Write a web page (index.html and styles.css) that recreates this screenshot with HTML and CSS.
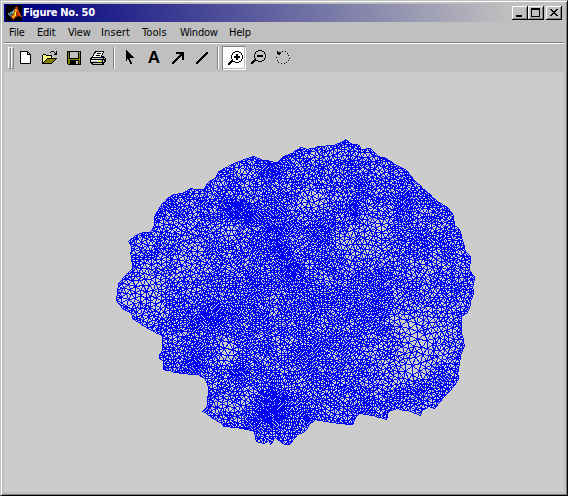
FILE: index.html
```html
<!DOCTYPE html>
<html lang="en">
<head>
<meta charset="utf-8">
<title>Figure No. 50</title>
<link rel="stylesheet" href="styles.css">
</head>
<body>
<main class="window">
  <header class="titlebar">
    <svg class="logo" viewBox="0 0 16 16" shape-rendering="crispEdges">
      <path fill="#000" d="M0 0h16v16H0z"/>
      <path fill="#6caab0" d="M1 9l4-2 3-3 1 1-3 7-2-1z"/>
      <path fill="#536b77" d="M1 9l4-1 2 2-2 3z"/>
      <path fill="#9c2d10" d="M10 1l-2 6-3 5 2 3 3-3 3-1 3 1-3-6-2-5z"/>
      <path fill="#ff9a00" d="M10 2l-2 7-2 3 1 2 3-4 1-5z"/>
      <path fill="#ffef3a" d="M10 4l-1 6-2 3 3-3z"/>
      <path fill="#e53b12" d="M11 3l1 8 3 1-2-5z"/>
    </svg>
    <h1 class="title">Figure No. 50</h1>
    <div class="controls">
      <button class="control" aria-label="Minimize"><svg viewBox="0 0 16 14" shape-rendering="crispEdges"><path d="M4 9h6v2H4z"/></svg></button>
      <button class="control" aria-label="Maximize"><svg viewBox="0 0 16 14" shape-rendering="crispEdges"><path fill-rule="evenodd" d="M3 2h9v9H3zM4 4v6h7V4z"/></svg></button>
      <button class="control close" aria-label="Close"><svg viewBox="0 0 16 14" shape-rendering="crispEdges"><path d="M4 3h2v1h1v1h2V4h1V3h2v1h-1v1h-1v1H9v1h1v1h1v1h1v1h-2V9H9V8H7v1H6v1H4V9h1V8h1V7h1V6H6V5H5V4H4z"/></svg></button>
    </div>
  </header>
  <nav class="menu">
    <span>File</span><span>Edit</span><span>View</span><span class="wide">Insert</span><span class="wide">Tools</span><span>Window</span><span>Help</span>
  </nav>
  <div class="toolbar">
    <i class="grip"></i><i class="grip"></i>
    <svg class="tool" viewBox="0 0 24 24" shape-rendering="crispEdges">
      <path d="M6 5h8v1h1v1h1v1h1v10H6z"/><path fill="#fff" d="M7 6h6v3h3v8H7z"/><path fill="#fff" d="M14 7h1v1h-1z"/>
    </svg>
    <svg class="tool" viewBox="0 0 24 24" shape-rendering="crispEdges">
      <path d="M4 9h1V8h3v1h6v3h5v1h-1v1h-1v1h-1v1h-1v1h-1v1H4z"/>
      <path fill="#ffff80" d="M5 9h3v1h5v2H9v1H8v1H7v1H6v1H5z"/>
      <path fill="#808000" d="M9 13h8v1h-1v1h-1v1h-1v1H6v-1h1v-1h1v-1h1z"/>
      <path d="M12 6h1V5h3v1h1v1h1V5h1v4h-3V8h1V7h-1V6h-3v1h-1z"/>
    </svg>
    <svg class="tool" viewBox="0 0 24 24" shape-rendering="crispEdges">
      <path d="M5 5h14v14H6v-1H5z"/><path fill="#808000" d="M6 6h12v12H6z"/>
      <path d="M7 6h10v7H7zM8 14h9v4H8z"/>
      <path fill="#c0c0c0" d="M8 6h8v6H8zM17 6h1v1h-1zM14 15h2v3h-2z"/>
    </svg>
    <svg class="tool" viewBox="0 0 24 24" shape-rendering="crispEdges">
      <path d="M9 5h9v2h-1v2h-1v1h2v1h1v1h1v4h-1v1h-1v2H6v-1H5v-1H4v-5h1v-1h1v-1h1V8h1V6h1z"/>
      <path fill="#fff" d="M10 6h7v1h-1v2h-1v2H7v-1h1V8h1V7h1z"/>
      <path d="M11 7h4v1h-4zM10 9h4v1h-4z"/>
      <path fill="#c0c0c0" d="M6 12h11v1H6zM5 14h11v2H5zM7 17h9v1H7zM18 12h1v1h-1zM17 14h1v2h-1z"/>
      <path fill="#ff0" d="M12 15h3v1h-3z"/><path fill="#fff" d="M5 14h7v1H5z"/>
    </svg>
    <i class="divider"></i>
    <svg class="tool" viewBox="0 0 24 24" shape-rendering="crispEdges">
      <path d="M8 4h1v1h1v1h1v1h1v1h1v1h1v1h1v1h1v1h-4v2h1v2h1v2h-2v-2h-1v-2h-1v-1h-1v1H9v1H8z"/>
    </svg>
    <span class="tool letter">A</span>
    <svg class="tool" viewBox="0 0 24 24" shape-rendering="crispEdges">
      <path d="M10 6h8v8h-2v-4h-1v1h-1v1h-1v1h-1v1h-1v1h-1v1H9v1H8v1H6v-2h1v-1h1v-1h1v-1h1v-1h1v-1h1v-1h1V9h1V8h-4z"/>
    </svg>
    <svg class="tool" viewBox="0 0 24 24" shape-rendering="crispEdges">
      <path d="M16 6h2v2h-1v1h-1v1h-1v1h-1v1h-1v1h-1v1h-1v1h-1v1H9v1H8v1H6v-2h1v-1h1v-1h1v-1h1v-1h1v-1h1v-1h1V9h1V8h1V7h1z"/>
    </svg>
    <i class="divider"></i>
    <svg class="tool pressed" viewBox="0 0 24 24" shape-rendering="crispEdges">
      <path d="M13 5h4v1h-4zM11 6h2v1h-2zM17 6h2v1h-2zM10 7h1v2h-1zM19 7h1v2h-1zM9 9h1v4H9zM20 9h1v4h-1zM10 13h1v2h-1zM19 13h1v2h-1zM11 15h2v1h-2zM17 15h2v1h-2zM13 16h4v1h-4z"/>
      <path d="M14 8h2v2h2v2h-2v2h-2v-2h-2v-2h2zM9 14h2v2h-1v1H9v1H8v1H6v-2h1v-1h1v-1h1z"/>
    </svg>
    <svg class="tool" viewBox="0 0 24 24" shape-rendering="crispEdges">
      <path transform="translate(-1 0)" d="M13 4h4v1h-4zM11 5h2v1h-2zM17 5h2v1h-2zM10 6h1v2h-1zM19 6h1v2h-1zM9 8h1v4H9zM20 8h1v4h-1zM10 12h1v2h-1zM19 12h1v2h-1zM11 14h2v1h-2zM17 14h2v1h-2zM13 15h4v1h-4zM12 9h6v2h-6z"/>
      <path d="M8 13h2v2H9v1H8v1H7v1H5v-2h1v-1h1v-1h1z"/>
    </svg>
    <svg class="tool" viewBox="0 0 24 24" shape-rendering="crispEdges">
      <path d="M7 5h1v1h3v2h-1v1H8V8H7zM12 5h1v1h-1zM15 5h1v1h-1zM17 7h1v1h-1zM18 9h1v1h-1zM19 12h1v1h-1zM18 14h1v1h-1zM16 16h1v1h-1zM14 17h1v1h-1zM11 17h1v1h-1zM8 16h1v1H8zM7 14h1v1H7zM6 11h1v1H6z"/>
    </svg>
  </div>
  <section class="figure"><canvas id="mesh" width="560" height="420"></canvas></section>
</main>
<script src="mesh.js"></script>
</body>
</html>
```
FILE: styles.css
```css
* { box-sizing: border-box; }
body {
  margin: 0;
  background: #c0c0c0;
  font-family: "DejaVu Sans Condensed", "DejaVu Sans", sans-serif;
  font-size: 11px;
  color: #000;
}
.window {
  width: 568px;
  height: 496px;
  padding: 3px 2px 2px 3px;
  border: 1px solid;
  border-color: #c0c0c0 #000 #000 #c0c0c0;
  box-shadow: inset 1px 1px #fff, inset -1px -1px #808080;
  display: flex;
  flex-direction: column;
  background: #c0c0c0;
}
.titlebar {
  height: 18px;
  width: 560px;
  flex: none;
  display: flex;
  align-items: center;
  padding: 0 2px;
  background: linear-gradient(90deg, #000080 0, #000080 20px, #c0c0c0 506px);
}
.logo { width: 16px; height: 16px; flex: none; }
.title {
  margin: 0 0 0 1px;
  color: #fff;
  font: bold 11px/18px "DejaVu Sans Condensed", sans-serif;
  letter-spacing: -0.28px;
}
.controls { display: flex; margin-left: auto; }
.control {
  width: 16px;
  height: 14px;
  padding: 0;
  border: 0;
  background: #c0c0c0;
  box-shadow: inset -1px -1px #000, inset 1px 1px #fff, inset -2px -2px #808080;
}
.control svg { display: block; width: 16px; height: 14px; }
.close { margin-left: 2px; }
.menu {
  height: 20px;
  flex: none;
  width: 560px;
  padding-left: 5px;
  display: grid;
  grid-template-columns: 28px 31px 33px 41px 38px 49px 40px;
  line-height: 22px;
  letter-spacing: -0.22px;
}
.menu .wide { letter-spacing: 0.1px; }
.toolbar {
  height: 30px;
  width: 560px;
  flex: none;
  display: flex;
  align-items: flex-start;
  padding: 4px 0 0 4px;
  border-top: 1px solid #808080;
  box-shadow: inset 0 1px #fff;
}
.grip {
  width: 3px;
  height: 22px;
  border: 1px solid;
  border-color: #fff #808080 #808080 #fff;
}
.tool { width: 24px; height: 24px; margin-top: -1px; flex: none; }
.divider {
  width: 2px;
  height: 22px;
  margin: 0 3px;
  background: linear-gradient(90deg, #808080 50%, #fff 50%);
}
.letter {
  font: bold 17px/24px "Liberation Sans", sans-serif;
  text-align: center;
}
.pressed {
  background: linear-gradient(#fff, #fff);
  box-shadow: inset 1px 1px #808080, inset -1px -1px #fff, inset -2px -2px #c0c0c0;
}
.figure { width: 560px; height: 420px; background: #ccc; }
.figure canvas { display: block; }
```
FILE: mesh.js
```js
// Outline of the surface, in window coordinates.
const outline = [116,300,118,283,125,275,132,268,132,263,130,253,131,247,128,241,135,235,142,232,150,232,154,225,154,216,162,203,167,198,173,194,182,193,190,188,197,189,203,189,208,182,215,177,218,171,233,163,247,158,253,156,260,159,270,161,277,162,283,156,293,152,300,147,307,149,318,146,333,145,340,142,345,139,350,143,359,145,361,149,370,148,378,156,386,158,393,163,405,169,415,181,427,192,437,201,447,207,452,213,454,225,459,229,462,240,465,251,470,256,469,270,474,276,472,287,473,293,467,312,461,316,461,333,464,345,461,352,457,373,458,378,452,387,443,397,438,403,434,408,428,406,421,411,420,415,410,411,397,408,388,411,386,419,373,415,358,413,355,417,352,424,340,423,327,421,315,419,310,423,303,432,297,434,289,444,282,443,275,437,270,444,268,440,263,443,256,441,253,430,245,429,237,427,223,426,220,422,212,418,205,412,202,411,206,407,207,400,208,387,205,379,198,374,180,373,163,369,163,360,159,358,159,354,162,350,162,335,147,328,132,318,131,313,122,308];
// x, y, radius, change in point spacing
const spots = [
  [270,168,14,-1.4],[230,208,16,-1.2],[246,214,12,-1.3],[272,225,14,-1.3],[277,250,9,-1.5],[290,268,13,-1.3],[255,280,12,-.9],[170,208,8,-1],[210,248,7,-1.3],
  [205,318,17,-1],[240,370,9,-1.6],[275,400,13,-1.5],[268,414,16,-1.5],[305,419,9,-1.5],[196,364,12,-1],[362,182,9,-1],[405,200,9,-1.3],[353,210,8,-1.2],[320,233,13,-1.1],
  [420,240,10,-1.1],[380,278,8,-1.2],[310,300,18,-.6],[380,305,14,-.7],[312,355,18,-.8],[367,405,8,-1],[418,390,6,-1.6],[240,318,25,-.5],[350,300,25,-.3],[435,190,14,-.5],
  [140,293,20,1.6],[314,197,11,2],[380,228,9,2.2],[356,245,14,1.4],[425,338,26,1.6],[415,369,8,5],[417,342,8,3.2],[225,344,8,2.6],[229,356,8,2.8],[198,245,8,1.5],
  [232,228,8,1.5],[233,402,12,1],[403,318,12,1.6],[395,365,16,1],[290,375,8,.8],[240,177,16,.6],[180,260,25,.5],[430,270,18,.7],[330,280,8,.6]
];
const n = outline.length / 2;
let seed = 5077;
const rnd = () => ((seed = (Math.imul(seed, 1664525) + 1013904223) >>> 0) / 4294967296);
function inside(x, y) {
  let c = false;
  for (let i = 0, j = n - 1; i < n; j = i++) {
    const a = outline[2*i], b = outline[2*i+1], d = outline[2*j], e = outline[2*j+1];
    if ((b > y) !== (e > y) && x < (d - a) * (y - b) / (e - b) + a) c = !c;
  }
  return c;
}
function spacing(x, y) {
  let r = 3.15 + .25 * Math.sin(x / 9 + y / 17) * Math.cos(y / 11 - x / 23);
  for (const s of spots) {
    const q = ((x - s[0]) ** 2 + (y - s[1]) ** 2) / (s[2] * s[2]);
    if (q < 5) r += s[3] * Math.exp(-q);
  }
  return Math.max(1.8, r);
}
const pts = [], cells = new Map();
function add(x, y, k) {
  const r = spacing(x, y) * k, cx = x >> 3, cy = y >> 3;
  for (let i = -1; i < 2; i++) for (let j = -1; j < 2; j++)
    for (const p of cells.get((cx + i) * 999 + cy + j) || [])
      if ((p[0] - x) ** 2 + (p[1] - y) ** 2 < r * r) return;
  const p = [x, y, k < 1], key = cx * 999 + cy;
  pts.push(p);
  if (!cells.has(key)) cells.set(key, []);
  cells.get(key).push(p);
}
for (let i = 0; i < n; i++) {
  const j = (i + 1) % n, x = outline[2*i], y = outline[2*i+1], u = outline[2*j] - x, v = outline[2*j+1] - y;
  const m = Math.max(1, Math.round(Math.hypot(u, v) / 3));
  for (let k = 0; k < m; k++) add(x + u * k / m, y + v * k / m, .3);
}
for (let i = 0; i < 160000; i++) {
  const x = 114 + rnd() * 362, y = 138 + rnd() * 308;
  if (inside(x, y)) add(x, y, 1);
}

// Sweep Delaunay triangulation over points sorted by x.
for (const p of pts) { p[0] += rnd() * 1e-3; p[1] += rnd() * 1e-3; }
pts.sort((a, b) => a[0] - b[0]);
const count = pts.length;
pts.push([-5000, -3000], [300, 9000], [5600, -3000]);
function circum(a, b, c) {
  const [x1, y1] = pts[a], [x2, y2] = pts[b], [x3, y3] = pts[c];
  const d = 2 * (x1 * (y2 - y3) + x2 * (y3 - y1) + x3 * (y1 - y2));
  const s1 = x1*x1 + y1*y1, s2 = x2*x2 + y2*y2, s3 = x3*x3 + y3*y3;
  const x = (s1 * (y2 - y3) + s2 * (y3 - y1) + s3 * (y1 - y2)) / d;
  const y = (s1 * (x3 - x2) + s2 * (x1 - x3) + s3 * (x2 - x1)) / d;
  return { a, b, c, x, y, r: (x - x1) ** 2 + (y - y1) ** 2 };
}
let open = [circum(count, count + 1, count + 2)];
const closed = [];
for (let i = 0; i < count; i++) {
  const [px, py] = pts[i], keep = [], edges = new Map();
  for (const t of open) {
    const dx = px - t.x;
    if (dx > 0 && dx * dx > t.r) { closed.push(t); continue; }
    if (dx * dx + (py - t.y) ** 2 > t.r) { keep.push(t); continue; }
    for (const [u, v] of [[t.a, t.b], [t.b, t.c], [t.c, t.a]]) {
      const key = Math.min(u, v) * 100000 + Math.max(u, v);
      if (edges.has(key)) edges.delete(key); else edges.set(key, [u, v]);
    }
  }
  for (const [u, v] of edges.values()) keep.push(circum(u, v, i));
  open = keep;
}
const triangles = closed.concat(open).filter(t => {
  if (Math.max(t.a, t.b, t.c) >= count) return false;
  const a = pts[t.a], b = pts[t.b], c = pts[t.c];
  return inside((a[0] + b[0] + c[0]) / 3, (a[1] + b[1] + c[1]) / 3);
});

// Relax interior vertices toward the mean of their neighbours.
for (let pass = 0; pass < 3; pass++) {
  const sum = pts.map(() => [0, 0, 0]);
  for (const t of triangles)
    for (const [u, v] of [[t.a, t.b], [t.b, t.c], [t.c, t.a], [t.b, t.a], [t.c, t.b], [t.a, t.c]]) {
      sum[u][0] += pts[v][0]; sum[u][1] += pts[v][1]; sum[u][2]++;
    }
  for (let i = 0; i < count; i++) {
    const s = sum[i], p = pts[i];
    if (!p[2] && s[2]) { p[0] = s[0] / s[2]; p[1] = s[1] / s[2]; }
  }
}

const ctx = document.getElementById("mesh").getContext("2d");
ctx.fillStyle = "#0000ff";
function line(a, b) {
  let x = Math.round(a[0]) - 4, y = Math.round(a[1]) - 72;
  const u = Math.round(b[0]) - 4, v = Math.round(b[1]) - 72;
  const dx = Math.abs(u - x), dy = -Math.abs(v - y), sx = x < u ? 1 : -1, sy = y < v ? 1 : -1;
  let e = dx + dy;
  for (;;) {
    ctx.fillRect(x, y, 1, 1);
    if (x === u && y === v) break;
    const f = 2 * e;
    if (f >= dy) { e += dy; x += sx; }
    if (f <= dx) { e += dx; y += sy; }
  }
}
for (const t of triangles) {
  const a = pts[t.a], b = pts[t.b], c = pts[t.c];
  line(a, b); line(b, c); line(c, a);
}
```
